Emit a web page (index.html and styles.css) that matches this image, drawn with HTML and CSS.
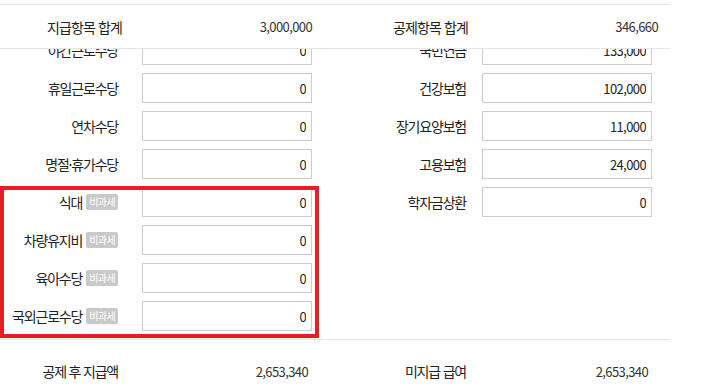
FILE: index.html
```html
<!DOCTYPE html>
<html lang="ko">
<head>
<meta charset="utf-8">
<link rel="stylesheet" href="styles.css">
</head>
<body>
<div class="wrap">
  <div class="summary">
    <div class="sum-label">지급항목 합계</div>
    <div class="sum-value">3,000,000</div>
    <div class="sum-label">공제항목 합계</div>
    <div class="sum-value">346,660</div>
  </div>
  <div class="scroll">
    <div class="rows">
      <div class="row">
        <div class="label">야간근로수당</div>
        <input class="field" type="text" value="0">
        <div class="label label-r">국민연금</div>
        <input class="field" type="text" value="133,000">
      </div>
      <div class="row">
        <div class="label">휴일근로수당</div>
        <input class="field" type="text" value="0">
        <div class="label label-r">건강보험</div>
        <input class="field" type="text" value="102,000">
      </div>
      <div class="row">
        <div class="label">연차수당</div>
        <input class="field" type="text" value="0">
        <div class="label label-r">장기요양보험</div>
        <input class="field" type="text" value="11,000">
      </div>
      <div class="row">
        <div class="label">명절·휴가수당</div>
        <input class="field" type="text" value="0">
        <div class="label label-r">고용보험</div>
        <input class="field" type="text" value="24,000">
      </div>
      <div class="row">
        <div class="label">식대<span class="badge">비과세</span></div>
        <input class="field" type="text" value="0">
        <div class="label label-r">학자금상환</div>
        <input class="field" type="text" value="0">
      </div>
      <div class="row">
        <div class="label">차량유지비<span class="badge">비과세</span></div>
        <input class="field" type="text" value="0">
      </div>
      <div class="row">
        <div class="label">육아수당<span class="badge">비과세</span></div>
        <input class="field" type="text" value="0">
      </div>
      <div class="row">
        <div class="label">국외근로수당<span class="badge">비과세</span></div>
        <input class="field" type="text" value="0">
      </div>
    </div>
    <div class="highlight"></div>
  </div>
  <div class="footer">
    <div class="label">공제 후 지급액</div>
    <div class="foot-value">2,653,340</div>
    <div class="label label-r">미지급 급여</div>
    <div class="foot-value">2,653,340</div>
  </div>
</div>
</body>
</html>
```
FILE: styles.css
```css
* { box-sizing: border-box; }
html, body { margin: 0; padding: 0; background: #fff; }
body {
  font-family: "Noto Sans CJK KR", "Noto Sans", sans-serif;
  color: #333;
  font-size: 13px;
}
.wrap {
  width: 670px;
  padding-top: 4px;
}
.summary {
  display: grid;
  grid-template-columns: 130px 182px 164px 182px;
  align-items: center;
  height: 45px;
  border-top: 1px solid #e6e6e6;
  border-bottom: 1px solid #e6e6e6;
  background: #fff;
}
.sum-label {
  text-align: right;
  padding-right: 8px;
  font-size: 14px;
  letter-spacing: -0.9px;
  color: #222;
}
.sum-value {
  text-align: right;
  font-size: 13px;
  letter-spacing: -0.6px;
  color: #333;
}
.scroll {
  position: relative;
  height: 291px;
  overflow: hidden;
  border-bottom: 1px solid #e6e6e6;
}
.rows {
  margin-top: -18px;
}
.row {
  display: grid;
  grid-template-columns: 142px 170px 170px 170px;
  align-items: center;
  height: 38px;
}
.label {
  display: flex;
  justify-content: flex-end;
  align-items: center;
  padding-right: 24px;
  font-size: 14px;
  letter-spacing: -1.2px;
  color: #222;
  white-space: nowrap;
}
.label-r { padding-right: 16px; }
.badge {
  display: inline-block;
  margin-left: 4px;
  background: #c9c9c9;
  color: #fff;
  font-size: 10px;
  letter-spacing: -0.6px;
  line-height: 16px;
  height: 16px;
  padding: 0 3px;
  border-radius: 2px;
}
.field {
  width: 170px;
  height: 30px;
  border: 1px solid #cccccc;
  background: #fff;
  text-align: right;
  padding: 0 5px 0 4px;
  margin: 0;
  font-family: "Noto Sans CJK KR", "Noto Sans", sans-serif;
  font-size: 13px;
  letter-spacing: -0.6px;
  color: #222;
  outline: none;
}
.highlight {
  position: absolute;
  left: 0;
  top: 137px;
  width: 319px;
  height: 152px;
  border: 4px solid #ed1c24;
}
.footer {
  display: grid;
  grid-template-columns: 142px 170px 170px 170px;
  align-items: center;
  height: 62px;
}
.foot-value {
  text-align: right;
  padding-right: 4px;
  font-size: 13px;
  letter-spacing: -0.6px;
  color: #333;
}
```
